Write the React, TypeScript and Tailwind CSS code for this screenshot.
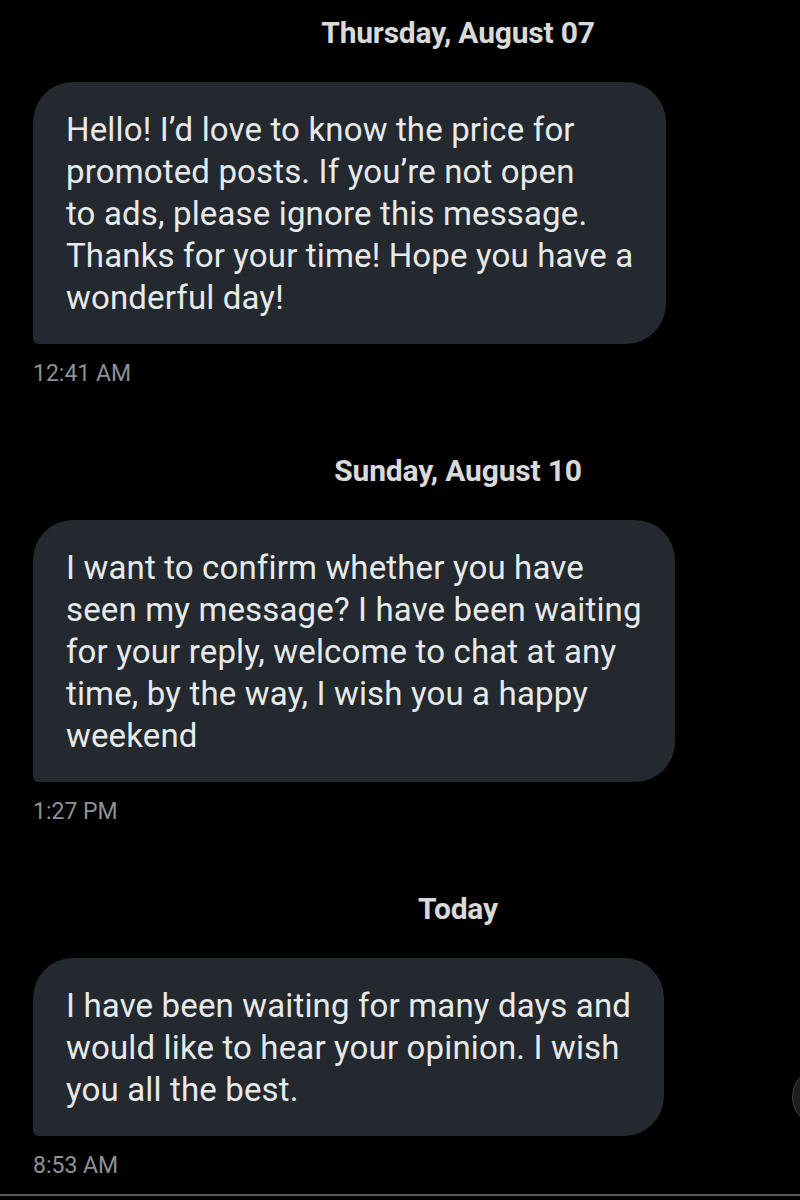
import React from "react";

type Msg = { date: string; lines: string[]; time: string };

const msgs: Msg[] = [
  {
    date: "Thursday, August 07",
    lines: [
      "Hello! I’d love to know the price for",
      "promoted posts. If you’re not open",
      "to ads, please ignore this message.",
      "Thanks for your time! Hope you have a",
      "wonderful day!",
    ],
    time: "12:41 AM",
  },
  {
    date: "Sunday, August 10",
    lines: [
      "I want to confirm whether you have",
      "seen my message? I have been waiting",
      "for your reply, welcome to chat at any",
      "time, by the way, I wish you a happy",
      "weekend",
    ],
    time: "1:27 PM",
  },
  {
    date: "Today",
    lines: [
      "I have been waiting for many days and",
      "would like to hear your opinion. I wish",
      "you all the best.",
    ],
    time: "8:53 AM",
  },
];

export default function App() {
  return (
    <div
      className="relative w-[800px] h-[1200px] overflow-hidden bg-black flex flex-col"
      style={{ fontFamily: "Roboto, 'Noto Sans', sans-serif" }}
    >
      <div className="flex flex-col pt-[15px] pl-[33px]">
        {msgs.map((m, i) => (
          <div key={i} className={`flex flex-col ${i > 0 ? "mt-[65px]" : ""}`}>
            <div className="flex justify-center pl-[83px]">
              <span className="text-[30px] leading-[36px] font-bold text-[#d9d9d9] tracking-[-0.2px]">
                {m.date}
              </span>
            </div>
            <div className="mt-[31px] self-start bg-[#23292e] rounded-[40px] rounded-bl-[6px] pl-[33px] pr-[33px] pt-[27px] pb-[25px]">
              {m.lines.map((l, j) => (
                <div
                  key={j}
                  className="whitespace-nowrap text-[33px] leading-[42px] tracking-[0.15px] text-[#e7e9ea]"
                >
                  {l}
                </div>
              ))}
            </div>
            <div className="mt-[16px] text-[23px] leading-[28px] text-[#8e9195]">
              {m.time}
            </div>
          </div>
        ))}
      </div>
      <div className="absolute left-[792px] top-[1067px] w-[60px] h-[60px] rounded-full bg-[#1c1f22] border border-[#3a3d41]" />
      <div className="absolute left-0 right-0 top-[1194px] h-[2px] bg-[#5a5a5a]" />
    </div>
  );
}
